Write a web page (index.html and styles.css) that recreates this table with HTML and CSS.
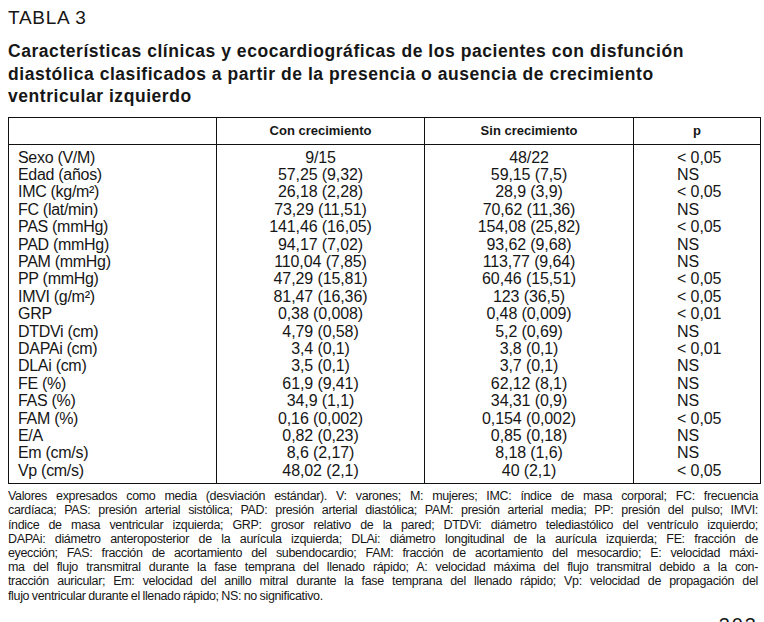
FILE: index.html
```html
<!DOCTYPE html>
<html lang="es">
<head>
<meta charset="utf-8">
<link rel="stylesheet" href="styles.css">
</head>
<body>
<div class="page">
  <div class="label">TABLA 3</div>
  <h1 class="title">Características clínicas y ecocardiográficas de los pacientes con disfunción<br>diastólica clasificados a partir de la presencia o ausencia de crecimiento<br>ventricular izquierdo</h1>
  <table class="data">
    <colgroup>
      <col class="c-label"><col class="c-val"><col class="c-val2"><col class="c-p">
    </colgroup>
    <thead>
      <tr><th></th><th>Con crecimiento</th><th>Sin crecimiento</th><th>p</th></tr>
    </thead>
    <tbody>
      <tr class="first"><td>Sexo (V/M)</td><td>9/15</td><td>48/22</td><td>&lt; 0,05</td></tr>
      <tr><td>Edad (años)</td><td>57,25 (9,32)</td><td>59,15 (7,5)</td><td>NS</td></tr>
      <tr><td>IMC (kg/m²)</td><td>26,18 (2,28)</td><td>28,9 (3,9)</td><td>&lt; 0,05</td></tr>
      <tr><td>FC (lat/min)</td><td>73,29 (11,51)</td><td>70,62 (11,36)</td><td>NS</td></tr>
      <tr><td>PAS (mmHg)</td><td>141,46 (16,05)</td><td>154,08 (25,82)</td><td>&lt; 0,05</td></tr>
      <tr><td>PAD (mmHg)</td><td>94,17 (7,02)</td><td>93,62 (9,68)</td><td>NS</td></tr>
      <tr><td>PAM (mmHg)</td><td>110,04 (7,85)</td><td>113,77 (9,64)</td><td>NS</td></tr>
      <tr><td>PP (mmHg)</td><td>47,29 (15,81)</td><td>60,46 (15,51)</td><td>&lt; 0,05</td></tr>
      <tr><td>IMVI (g/m²)</td><td>81,47 (16,36)</td><td>123 (36,5)</td><td>&lt; 0,05</td></tr>
      <tr><td>GRP</td><td>0,38 (0,008)</td><td>0,48 (0,009)</td><td>&lt; 0,01</td></tr>
      <tr><td>DTDVi (cm)</td><td>4,79 (0,58)</td><td>5,2 (0,69)</td><td>NS</td></tr>
      <tr><td>DAPAi (cm)</td><td>3,4 (0,1)</td><td>3,8 (0,1)</td><td>&lt; 0,01</td></tr>
      <tr><td>DLAi (cm)</td><td>3,5 (0,1)</td><td>3,7 (0,1)</td><td>NS</td></tr>
      <tr><td>FE (%)</td><td>61,9 (9,41)</td><td>62,12 (8,1)</td><td>NS</td></tr>
      <tr><td>FAS (%)</td><td>34,9 (1,1)</td><td>34,31 (0,9)</td><td>NS</td></tr>
      <tr><td>FAM (%)</td><td>0,16 (0,002)</td><td>0,154 (0,002)</td><td>&lt; 0,05</td></tr>
      <tr><td>E/A</td><td>0,82 (0,23)</td><td>0,85 (0,18)</td><td>NS</td></tr>
      <tr><td>Em (cm/s)</td><td>8,6 (2,17)</td><td>8,18 (1,6)</td><td>NS</td></tr>
      <tr class="last"><td>Vp (cm/s)</td><td>48,02 (2,1)</td><td>40 (2,1)</td><td>&lt; 0,05</td></tr>
    </tbody>
  </table>
  <div class="note">
    <span class="ln">Valores expresados como media (desviación estándar). V: varones; M: mujeres; IMC: índice de masa corporal; FC: frecuencia</span>
    <span class="ln">cardíaca; PAS: presión arterial sistólica; PAD: presión arterial diastólica; PAM: presión arterial media; PP: presión del pulso; IMVI:</span>
    <span class="ln">índice de masa ventricular izquierda; GRP: grosor relativo de la pared; DTDVi: diámetro telediastólico del ventrículo izquierdo;</span>
    <span class="ln">DAPAi: diámetro anteroposterior de la aurícula izquierda; DLAi: diámetro longitudinal de la aurícula izquierda; FE: fracción de</span>
    <span class="ln">eyección; FAS: fracción de acortamiento del subendocardio; FAM: fracción de acortamiento del mesocardio; E: velocidad máxi-</span>
    <span class="ln">ma del flujo transmitral durante la fase temprana del llenado rápido; A: velocidad máxima del flujo transmitral debido a la con-</span>
    <span class="ln">tracción auricular; Em: velocidad del anillo mitral durante la fase temprana del llenado rápido; Vp: velocidad de propagación del</span>
    <span class="ln end">flujo ventricular durante el llenado rápido; NS: no significativo.</span>
  </div>
  <div class="folio">303</div>
</div>
</body>
</html>
```

FILE: styles.css
```css
html, body {
  margin: 0;
  padding: 0;
  background: #fff;
  overflow: hidden;
}
body {
  font-family: "Liberation Sans", Arial, sans-serif;
  color: #161616;
}
.page {
  width: 752px;
  padding: 7px 0 0 8px;
}
.label {
  font-size: 19px;
  line-height: 22px;
  letter-spacing: 0.7px;
  height: 22px;
}
.title {
  margin: 11px 0 0 0;
  font-size: 17.5px;
  line-height: 22.5px;
  font-weight: bold;
  letter-spacing: 0.55px;
  white-space: nowrap;
}
.data {
  margin-top: 9px;
  width: 752px;
  border-collapse: collapse;
  border: 1px solid #111;
  table-layout: fixed;
  font-size: 16px;
}
.c-label { width: 208px; }
.c-val { width: 208px; }
.c-val2 { width: 209px; }
.c-p { width: 127px; }
.data th {
  font-size: 13px;
  font-weight: bold;
  height: 26px;
  padding: 0;
  border-bottom: 1px solid #111;
  border-left: 1px solid #111;
  text-align: center;
  vertical-align: middle;
}
.data th:first-child { border-left: none; }
.data td {
  padding: 0;
  line-height: 17.4px;
  text-align: center;
  border-left: 1px solid #111;
  white-space: nowrap;
  letter-spacing: -0.1px;
}
.data td:first-child {
  text-align: left;
  padding-left: 9px;
  border-left: none;
  letter-spacing: -0.3px;
}
.data td:last-child {
  text-align: left;
  padding-left: 43px;
}
.data tr.first td { padding-top: 4px; }
.data tr.last td { padding-bottom: 4px; }
.note {
  margin-top: 5px;
  width: 750px;
  font-size: 12.5px;
  line-height: 14.2px;
  letter-spacing: -0.35px;
  word-spacing: -0.5px;
}
.ln {
  display: block;
  white-space: nowrap;
  text-align: justify;
  text-align-last: justify;
}
.ln.end {
  text-align-last: left;
}
.folio {
  margin-top: 11px;
  text-align: right;
  font-size: 20px;
  letter-spacing: 2px;
  padding-right: 2px;
}
```
